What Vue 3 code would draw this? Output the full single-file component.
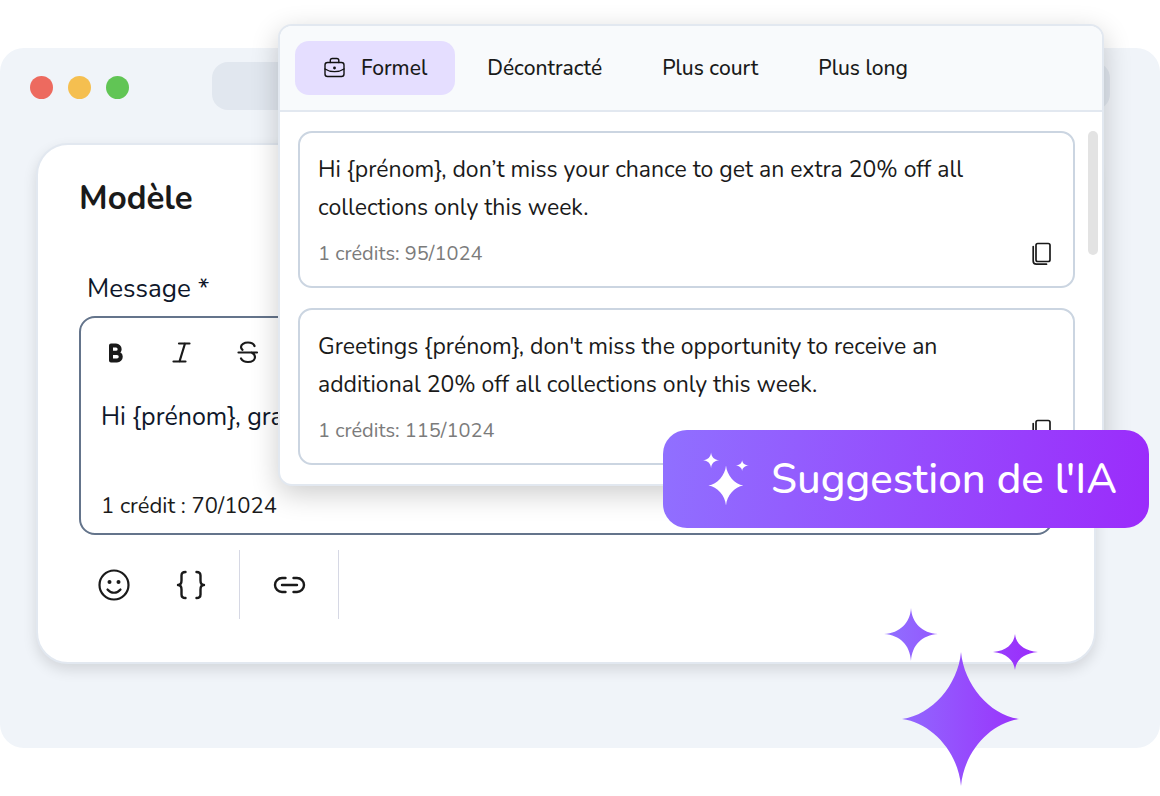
<script setup>
import { ref } from 'vue'

const tabs = ['Formel', 'Décontracté', 'Plus court', 'Plus long']
const activeTab = ref('Formel')

const suggestions = [
  { text: 'Hi {prénom}, don’t miss your chance to get an extra 20% off all collections only this week.', credits: '1 crédits: 95/1024' },
  { text: "Greetings {prénom}, don't miss the opportunity to receive an additional 20% off all collections only this week.", credits: '1 crédits: 115/1024' },
]

const message = ref('Hi {prénom}, gra')

const sparkles = [
  'M27 0C28 15 38 25 54 26C38 27 28 37 27 53C26 37 16 27 0 26C16 25 26 15 27 0Z',
  'M131 26C132 36 140 43 154 44C140 45 132 52 131 62C130 52 122 45 109 44C122 43 130 36 131 26Z',
  'M77 44C80 77 106 107 135 111C106 115 80 144 77 178C74 144 48 115 18 111C48 107 74 77 77 44Z',
]

const useSuggestion = (text) => {
  message.value = text
}
</script>

<template>
  <div class="page">
    <div class="window">
      <header class="window-bar">
        <span class="dot red"></span>
        <span class="dot yellow"></span>
        <span class="dot green"></span>
        <div class="address"></div>
      </header>

      <main class="editor">
        <h1>Modèle</h1>
        <label class="field-label" for="message">Message *</label>

        <div class="field">
          <div class="format">
            <button type="button" aria-label="Gras">
              <svg width="24" height="24" viewBox="0 0 24 24" fill="none" stroke="#1a1a1a" stroke-width="4" stroke-linejoin="round">
                <path d="M7 4.500h5a3.500 3.500 0 0 1 0 7.300H7zM7 12h6a3.700 3.700 0 0 1 0 7.500H7z" />
              </svg>
            </button>
            <button type="button" aria-label="Italique">
              <svg width="24" height="24" viewBox="0 0 24 24" fill="none" stroke="#1a1a1a" stroke-width="2.200" stroke-linecap="round">
                <path d="M9 2.500h10.500M3.500 20.500h12M15 2.500L9.500 20.500" />
              </svg>
            </button>
            <button type="button" aria-label="Barré">
              <svg width="24" height="24" viewBox="0 0 24 24" fill="none" stroke="#1a1a1a" stroke-width="2.200" stroke-linecap="round">
                <path d="M2.500 11.500h18.500M18.500 5C17.500 2.500 15 1.500 12 1.500C8 1.500 5 3.500 5 6C5 7.200 5.500 8 6.500 8.800M5 17.500C6.500 20.300 9 21 12 21C16 21 19 19 19 16C19 14 17.500 12.500 15.500 11.500" />
              </svg>
            </button>
          </div>
          <textarea id="message" v-model="message" rows="1"></textarea>
          <p class="counter">1 crédit : 70/1024</p>
        </div>

        <div class="tools">
          <button type="button" aria-label="Emoji">
            <svg width="34" height="34" viewBox="0 0 34 34" fill="none" stroke="#1a1a1a" stroke-width="2.200" stroke-linecap="round">
              <circle cx="17" cy="17" r="14.500" />
              <path d="M10.500 21.500C14 25.800 20 25.800 23.500 21.500" />
              <circle cx="12.500" cy="14" r="2" fill="#1a1a1a" stroke="none" />
              <circle cx="21.500" cy="14" r="2" fill="#1a1a1a" stroke="none" />
            </svg>
          </button>
          <button type="button" aria-label="Variable">
            <svg width="34" height="34" viewBox="0 0 34 34" fill="none" stroke="#1a1a1a" stroke-width="2.400" stroke-linecap="round" stroke-linejoin="round">
              <path d="M12.500 4C9.500 4 8.500 5 8.500 7.500V12.500C8.500 15.500 7 17 5 17C7 17 8.500 18.500 8.500 21.500V26.500C8.500 29 9.500 30 12.500 30" />
              <path d="M23.500 4C26.500 4 27.500 5 27.500 7.500V12.500C27.500 15.500 29 17 31 17C29 17 27.500 18.500 27.500 21.500V26.500C27.500 29 26.500 30 23.500 30" />
            </svg>
          </button>
          <span class="divider"></span>
          <button type="button" aria-label="Lien">
            <svg width="34" height="34" viewBox="0 0 34 34" fill="none" stroke="#1a1a1a" stroke-width="2.400" stroke-linecap="round">
              <path d="M13.500 10H10a7 7 0 0 0 0 14H13.500M21.500 10H25a7 7 0 0 1 0 14H21.500M10 17H25" />
            </svg>
          </button>
          <span class="divider"></span>
        </div>
      </main>
    </div>

    <section class="popover">
      <nav class="tabs">
        <button
          v-for="tab in tabs"
          :key="tab"
          type="button"
          :class="{ active: activeTab === tab }"
          @click="activeTab = tab"
        >
          <svg v-if="tab === 'Formel'" width="24" height="24" viewBox="0 0 24 24" fill="none" stroke="#111" stroke-width="1.400" stroke-linecap="round" stroke-linejoin="round">
            <rect x="2" y="6.500" width="19" height="14" rx="2.500" />
            <path d="M7.300 6.500V4.500a2 2 0 0 1 2-2h4.500a2 2 0 0 1 2 2v2M2 13C7.300 16.500 15.800 16.500 21 13" />
            <circle cx="11.500" cy="12" r="0.700" fill="#111" />
          </svg>
          <span>{{ tab }}</span>
        </button>
      </nav>

      <div class="results">
        <ul>
          <li v-for="item in suggestions" :key="item.credits">
            <p>{{ item.text }}</p>
            <div class="meta">
              <span>{{ item.credits }}</span>
              <button type="button" aria-label="Copier" @click="useSuggestion(item.text)">
                <svg width="24" height="24" viewBox="0 0 24 24" fill="none" stroke="#1a1a1a" stroke-width="1.700" stroke-linecap="round">
                  <rect x="6" y="1.500" width="14" height="18" rx="1.800" />
                  <path d="M3.200 4.500V19a3.200 3.200 0 0 0 3.200 3.200H16.500" />
                </svg>
              </button>
            </div>
          </li>
        </ul>
        <span class="thumb"></span>
      </div>
    </section>

    <button type="button" class="ai-btn">
      <svg width="46" height="54" viewBox="0 0 154 178" fill="#fff">
        <path v-for="d in sparkles" :key="d" :d="d" />
      </svg>
      <span>Suggestion de l'IA</span>
    </button>

    <svg class="sparkles" width="154" height="178" viewBox="0 0 154 178" fill="url(#violet)">
      <defs>
        <linearGradient id="violet" gradientUnits="userSpaceOnUse" x1="0" y1="0" x2="154" y2="0">
          <stop offset="0" stop-color="#9070ff" />
          <stop offset="1" stop-color="#9b2bfb" />
        </linearGradient>
      </defs>
      <path v-for="d in sparkles" :key="d" :d="d" />
    </svg>
  </div>
</template>

<style>
body {
  margin: 0;
  background: #fff;
}
</style>

<style scoped>
* {
  box-sizing: border-box;
}

.page {
  position: relative;
  padding: 48px 0;
  font-family: 'Nunito', 'Lato', sans-serif;
  color: #1a1a1a;
}

button {
  display: flex;
  align-items: center;
  padding: 0;
  border: 0;
  background: none;
  font-family: inherit;
  color: inherit;
  cursor: pointer;
}

svg {
  flex: none;
}

.window {
  padding: 0 64px 84px 36px;
  border-radius: 24px;
  background: #f0f4f9;
}

.window-bar {
  display: flex;
  align-items: center;
  gap: 15px;
  height: 95px;
  padding-bottom: 16px;
  margin: 0 -14px 0 -6px;
}

.dot {
  width: 23px;
  height: 23px;
  border-radius: 50%;
}

.red {
  background: #ed6a5f;
}

.yellow {
  background: #f5bf50;
}

.green {
  background: #61c555;
}

.address {
  flex: 1;
  height: 48px;
  margin: 0 0 4px 68px;
  border-radius: 16px;
  background: #e1e7ef;
}

.editor {
  padding: 32px 41px 43px;
  border: 2px solid #e2e8f0;
  border-radius: 32px;
  background: #fff;
  box-shadow: 0 6px 14px rgba(0, 0, 0, 0.12);
}

h1 {
  margin: 0 0 48px;
  font-size: 33px;
  line-height: 44px;
  font-weight: 700;
}

.field-label {
  display: block;
  margin: 0 0 7px 8px;
  font-size: 26px;
  line-height: 40px;
  color: #0f172a;
}

.field {
  padding: 23px 20px 5px;
  border: 2px solid #64748b;
  border-radius: 16px;
}

.format {
  display: flex;
  gap: 42px;
  padding-left: 3px;
}

textarea {
  display: block;
  width: 100%;
  height: 72px;
  margin: 32px 0 0;
  padding: 0;
  border: 0;
  outline: 0;
  resize: none;
  background: none;
  font-family: inherit;
  font-size: 25px;
  line-height: 40px;
  color: #0f172a;
}

.counter {
  margin: 0;
  padding: 15px 0 0;
  font-size: 22px;
  line-height: 44px;
}

.tools {
  display: flex;
  align-items: center;
  gap: 32px;
  height: 69px;
  margin-top: 15px;
  padding-left: 18px;
}

.tools button + button {
  margin-left: 10px;
}

.divider {
  width: 1px;
  height: 69px;
  background: #d6d8e4;
}

.popover {
  position: absolute;
  top: 24px;
  left: 278px;
  right: 56px;
  border: 2px solid #e2e8f0;
  border-radius: 14px;
  background: #fff;
  box-shadow: 0 8px 28px rgba(0, 0, 0, 0.2);
}

.tabs {
  display: flex;
  gap: 4px;
  padding: 15px;
  border-bottom: 2px solid #e2e8f0;
  border-radius: 12px 12px 0 0;
  background: #f8fafc;
}

.tabs button {
  gap: 14px;
  height: 54px;
  padding: 0 28px;
  border-radius: 14px;
  font-size: 21px;
  font-weight: 550;
}

.tabs .active {
  background: #e5deff;
}

.results {
  display: flex;
  gap: 13px;
  padding: 19px 4px 19px 18px;
}

ul {
  flex: 1;
  display: grid;
  gap: 20px;
  margin: 0;
  padding: 0;
  list-style: none;
}

li {
  padding: 18px 19px 17px 18px;
  border: 2px solid #cbd5e1;
  border-radius: 14px;
}

li p {
  margin: 0;
  padding-right: 40px;
  font-size: 23px;
  line-height: 38px;
}

.meta {
  display: flex;
  align-items: center;
  justify-content: space-between;
  margin-top: 12px;
  font-size: 20px;
  line-height: 30px;
  color: #7b7b7b;
}

.thumb {
  width: 10px;
  height: 124px;
  border-radius: 5px;
  background: #e3e3e3;
}

.ai-btn {
  position: absolute;
  top: 430px;
  right: 11px;
  gap: 22px;
  height: 98px;
  padding: 0 32px 0 40px;
  border-radius: 24px;
  background: linear-gradient(97deg, #9070ff, #9b2bfb);
  font-size: 42px;
  font-weight: 500;
  color: #fff;
}

.sparkles {
  position: absolute;
  top: 608px;
  right: 122px;
}
</style>
